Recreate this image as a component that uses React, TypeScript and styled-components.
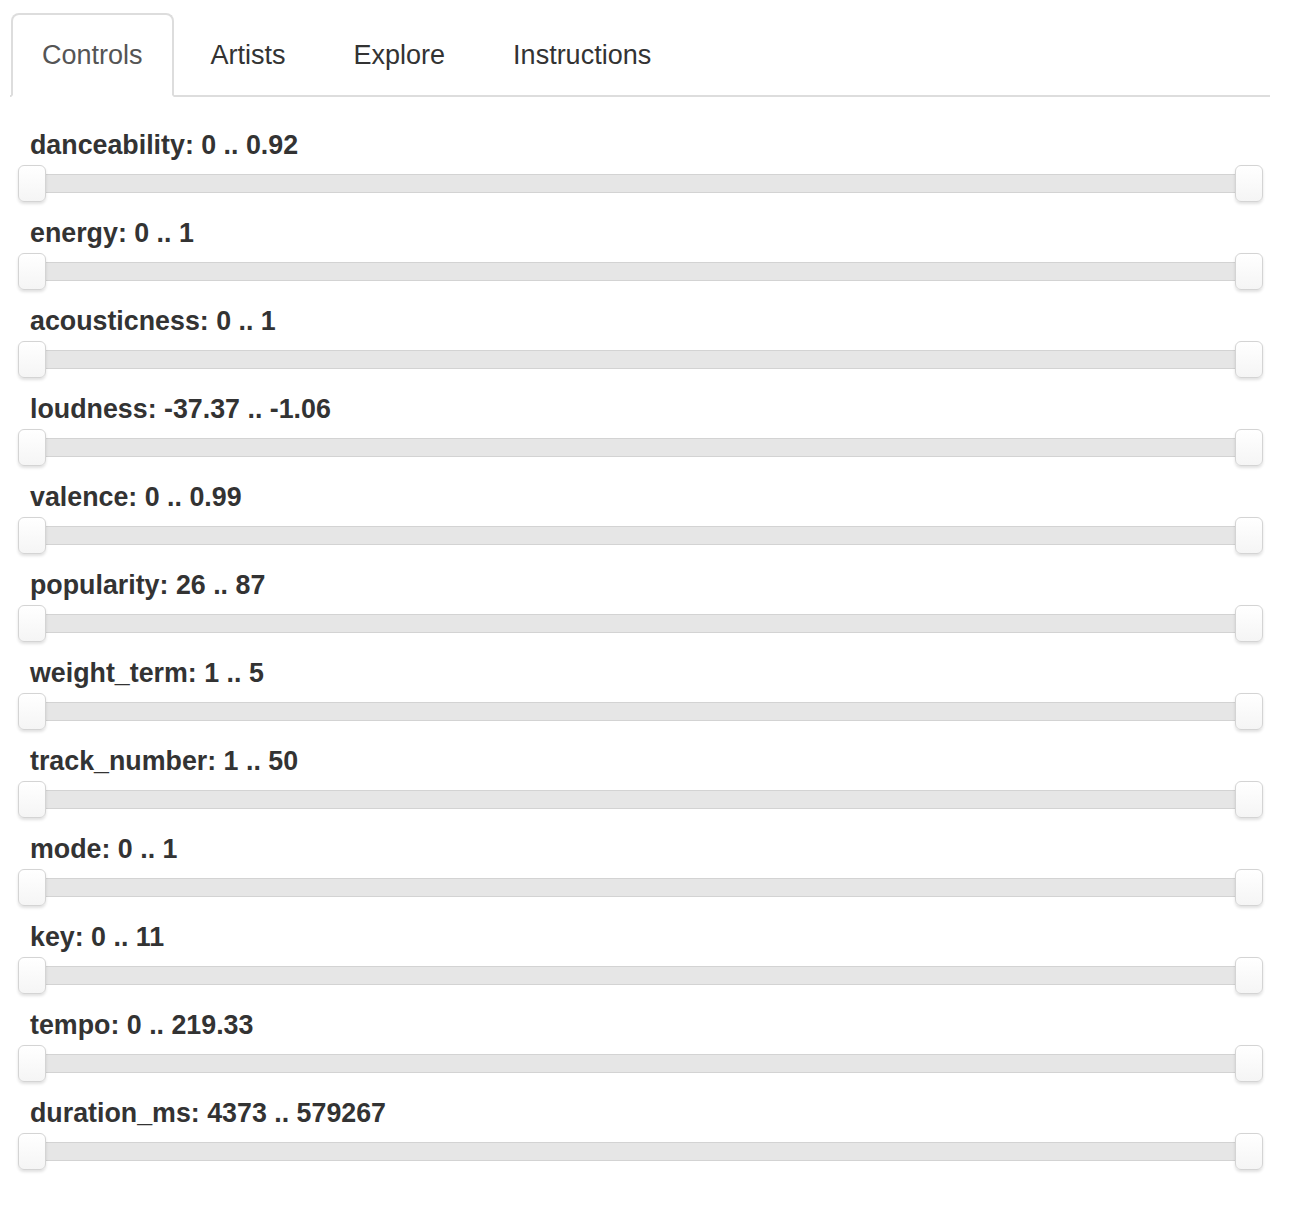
import React from "react";
import styled, { createGlobalStyle } from "styled-components";

const Global = createGlobalStyle`
  html, body { margin: 0; padding: 0; background: #fff; }
  body { font-family: "Liberation Sans", Arial, sans-serif; color: #333; }
`;

const Page = styled.div`
  padding: 13px 26px 0 10px;
  width: 1260px;
`;

const Nav = styled.ul`
  display: flex;
  gap: 6px;
  margin: 0;
  padding: 0 0 0 1px;
  list-style: none;
  border-bottom: 2px solid #dddddd;
`;

const Tab = styled.li<{ $active?: boolean }>`
  margin-bottom: -2px;
  padding: 20px 29px;
  line-height: 40px;
  font-size: 27px;
  color: ${(p) => (p.$active ? "#555" : "#333")};
  border: 2px solid ${(p) => (p.$active ? "#dddddd" : "transparent")};
  border-bottom-color: ${(p) => (p.$active ? "#fff" : "transparent")};
  border-radius: 8px 8px 0 0;
  background: ${(p) => (p.$active ? "#fff" : "transparent")};
`;

const Content = styled.div`
  padding-top: 28px;
  display: flex;
  flex-direction: column;
`;

const Row = styled.div`
  display: flex;
  flex-direction: column;
  padding-bottom: 11px;
`;

const Label = styled.div`
  padding-left: 20px;
  font-size: 26.8px;
  font-weight: bold;
  line-height: 40px;
  color: #333;
`;

const Slider = styled.div`
  position: relative;
  height: 37px;
  margin: 0 7px 0 8px;
`;

const Track = styled.div`
  position: absolute;
  left: 4px;
  right: 4px;
  top: 9px;
  height: 17px;
  background: #e6e6e6;
  border-top: 1px solid #d3d3d3;
  border-bottom: 1px solid #d3d3d3;
`;

const Handle = styled.div<{ $side: "left" | "right" }>`
  position: absolute;
  top: 0;
  ${(p) => (p.$side === "left" ? "left: 0;" : "right: 0;")}
  width: 26px;
  height: 35px;
  border: 1px solid #d4d4d4;
  border-radius: 6px;
  background: linear-gradient(#ffffff, #f5f5f5);
  box-shadow: 0 2px 3px rgba(0, 0, 0, 0.12);
`;

const tabs = ["Controls", "Artists", "Explore", "Instructions"];

const sliders: [string, string, string][] = [
  ["danceability", "0", "0.92"],
  ["energy", "0", "1"],
  ["acousticness", "0", "1"],
  ["loudness", "-37.37", "-1.06"],
  ["valence", "0", "0.99"],
  ["popularity", "26", "87"],
  ["weight_term", "1", "5"],
  ["track_number", "1", "50"],
  ["mode", "0", "1"],
  ["key", "0", "11"],
  ["tempo", "0", "219.33"],
  ["duration_ms", "4373", "579267"],
];

export default function App() {
  return (
    <>
      <Global />
      <Page>
        <Nav>
          {tabs.map((t, i) => (
            <Tab key={t} $active={i === 0}>
              {t}
            </Tab>
          ))}
        </Nav>
        <Content>
          {sliders.map(([name, lo, hi]) => (
            <Row key={name}>
              <Label>
                {name}: {lo} .. {hi}
              </Label>
              <Slider>
                <Track />
                <Handle $side="left" />
                <Handle $side="right" />
              </Slider>
            </Row>
          ))}
        </Content>
      </Page>
    </>
  );
}
